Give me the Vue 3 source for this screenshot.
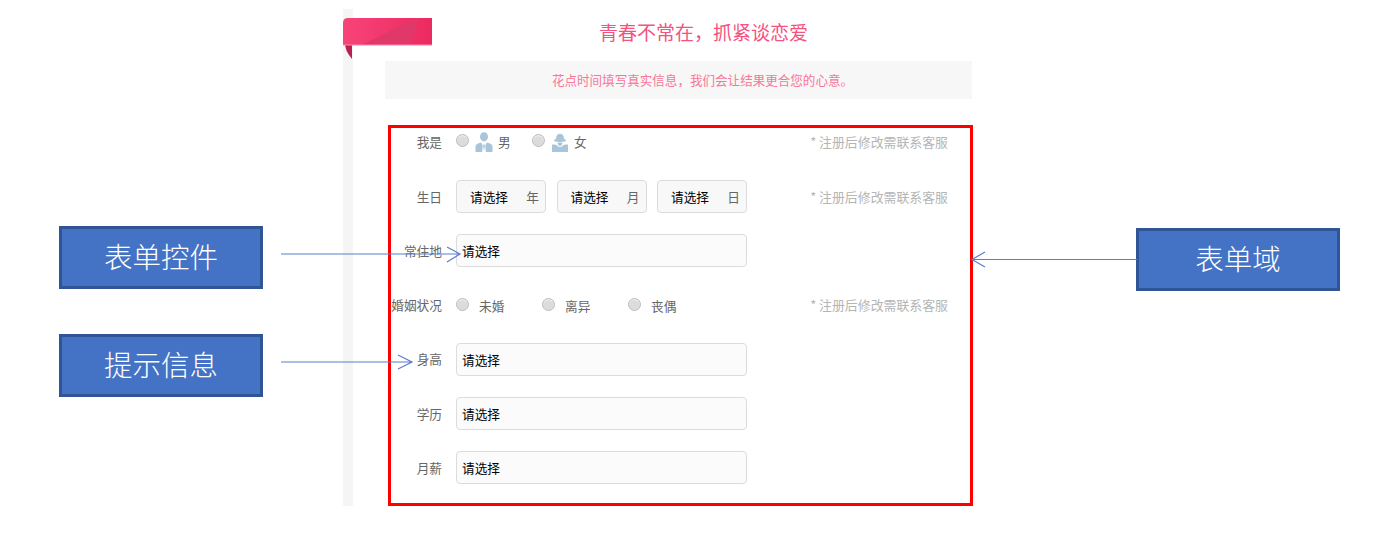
<script setup>
const hint = '* 注册后修改需联系客服'
const dateParts = ['年', '月', '日']
const genders = [
  { key: 'm', text: '男' },
  { key: 'f', text: '女' }
]
const marital = ['未婚', '离异', '丧偶']
const plainSelects = ['身高', '学历', '月薪']
</script>

<template>
  <div class="page">
    <div class="sheet">
      <h1 class="title">青春不常在，抓紧谈恋爱</h1>
      <p class="notice">花点时间填写真实信息，我们会让结果更合您的心意。</p>
      <form class="form" @submit.prevent>
        <div class="row row-first">
          <span class="label">我是</span>
          <div class="control genders">
            <label v-for="g in genders" :key="g.key" class="gender">
              <i class="radio"></i>
              <svg v-if="g.key === 'm'" class="gicon" viewBox="0 0 18 20">
                <ellipse cx="9" cy="4.800" rx="4" ry="4.600" fill="#a9c5d9" />
                <path d="M0.500 20V14.500Q0.500 11.800 6.300 10.600L7.700 13.500L7.200 20Z" fill="#a9c5d9" />
                <path d="M17.500 20V14.500Q17.500 11.800 11.700 10.600L10.300 13.500L10.800 20Z" fill="#a9c5d9" />
                <path d="M9 11.500L9.900 14L9 19L8.100 14Z" fill="#a9c5d9" />
              </svg>
              <svg v-else class="gicon" viewBox="0 0 18 20">
                <path d="M5 6.500C5 0 13 0 13 6.500L15.500 9Q9 11 2.500 9Z" fill="#a9c5d9" />
                <path d="M6.800 10.500H11.200V12.500L9 14.200L6.800 12.500Z" fill="#a9c5d9" />
                <path d="M1 12.500Q5 12 6 13.500Q9 16.500 12 13.500Q13 12 17 12.500V20H1Z" fill="#a9c5d9" />
              </svg>
              <span class="gtext">{{ g.text }}</span>
            </label>
          </div>
          <span class="hint">{{ hint }}</span>
        </div>

        <div class="row">
          <span class="label">生日</span>
          <div class="control dates">
            <div v-for="d in dateParts" :key="d" class="select small">
              <span class="value">请选择</span>
              <span class="unit">{{ d }}</span>
            </div>
          </div>
          <span class="hint">{{ hint }}</span>
        </div>

        <div class="row">
          <span class="label">常住地</span>
          <div class="control"><div class="select wide">请选择</div></div>
        </div>

        <div class="row">
          <span class="label">婚姻状况</span>
          <div class="control maritals">
            <label v-for="m in marital" :key="m" class="marital">
              <i class="radio"></i>
              <span>{{ m }}</span>
            </label>
          </div>
          <span class="hint">{{ hint }}</span>
        </div>

        <div v-for="s in plainSelects" :key="s" class="row">
          <span class="label">{{ s }}</span>
          <div class="control"><div class="select wide">请选择</div></div>
        </div>
      </form>
    </div>

    <svg class="ribbon" viewBox="0 0 89 41" width="89" height="41">
      <defs>
        <linearGradient id="rb" x1="0" x2="1" y1="0" y2="0">
          <stop offset="0" stop-color="#f74479" />
          <stop offset="1" stop-color="#ec2a60" />
        </linearGradient>
      </defs>
      <path d="M2 27L9 27V41L6 37Q3 33 2 27Z" fill="#b9204f" />
      <path d="M5 0H89V27H9Q0 27 0 27V5Q0 0 5 0Z" fill="url(#rb)" />
      <path d="M19 27L74 0H76L67 27Z" fill="#df3869" />
      <path d="M0 27H89" stroke="#f98bab" stroke-width="1" />
    </svg>

    <div class="callout c1">表单控件</div>
    <div class="callout c2">提示信息</div>
    <div class="callout c3">表单域</div>

    <svg class="arrows" viewBox="0 0 1381 544" width="1381" height="544">
      <path d="M281 254H459M447 247L460 254L447 262" />
      <path d="M281 362H411M398 355L412 362L398 369" />
      <path d="M1137 259.500H972M985 252L972 259.500L985 267" />
    </svg>
  </div>
</template>

<style>
html, body { margin: 0; background: #fff; }
</style>

<style scoped>
.page {
  position: relative;
  width: 1381px;
  height: 544px;
  overflow: hidden;
  background: #fff;
  font-family: "Noto Sans CJK SC", "Liberation Sans", sans-serif;
  font-size: 12.7px;
  color: #666;
}
.sheet {
  box-sizing: border-box;
  width: 630px;
  height: 497px;
  margin-left: 343px;
  position: relative;
  top: 9px;
  border-left: 10px solid #f5f5f5;
  padding-left: 32px;
}
.title {
  margin: 0;
  padding: 9px 2px 0 52px;
  width: 587px;
  height: 52px;
  box-sizing: border-box;
  line-height: 28px;
  text-align: center;
  font-size: 19px;
  font-weight: 400;
  color: #f4527f;
}
.notice {
  box-sizing: border-box;
  margin: 0 0 26px;
  padding-left: 48px;
  width: 587px;
  height: 38px;
  line-height: 38px;
  background: #f7f7f7;
  text-align: center;
  font-size: 12.550px;
  color: #f8769a;
}
.form {
  box-sizing: border-box;
  width: 585px;
  height: 381px;
  margin-left: 3px;
  border: 3px solid #f00;
}
.row {
  display: flex;
  align-items: center;
  height: 33px;
  margin-bottom: 21.3px;
}
.row-first {
  height: 27px;
  margin-bottom: 25px;
}
.label {
  flex: 0 0 51px;
  text-align: right;
  white-space: nowrap;
  color: #666;
  position: relative;
  top: -0.5px;
}
.control {
  margin-left: 14px;
  flex: 1;
  display: flex;
  align-items: center;
}
.hint {
  margin-right: 22px;
  color: #b5b5b5;
  font-size: 12.9px;
  white-space: nowrap;
  position: relative;
  top: -0.5px;
}
.radio {
  display: block;
  box-sizing: border-box;
  width: 13px;
  height: 13px;
  border-radius: 50%;
  background: #dcdcdc;
  border: 1px solid #bcbcbc;
  box-shadow: inset 0 1px 1px #f2f2f2;
}
.genders { gap: 20px; }
.gender {
  display: flex;
  align-items: center;
}
.gicon {
  width: 18px;
  height: 20px;
  margin-left: 6px;
  margin-right: 5px;
}
.gender .radio { position: relative; top: -1px; }
.gtext { width: 14px; }
.marital {
  display: flex;
  align-items: center;
  width: 86px;
}
.marital .radio { margin-right: 10px; position: relative; top: -1px; }
.dates { gap: 10.5px; }
.select {
  box-sizing: border-box;
  height: 33px;
  border: 1.5px solid #dcdcdc;
  border-radius: 4px;
  background: #fbfbfb;
  color: #000;
  display: flex;
  align-items: center;
}
.wide {
  width: 291px;
  padding-left: 5px;
}
.small {
  width: 90px;
  padding: 0 6px 0 13px;
  justify-content: space-between;
  background: #f8f8f8;
}
.unit { color: #666; }
.ribbon {
  position: absolute;
  left: 343px;
  top: 18px;
}
.callout {
  position: absolute;
  box-sizing: border-box;
  width: 204px;
  height: 63px;
  border: 3px solid #2f5597;
  background: #4472c4;
  color: #fff;
  font-size: 28.500px;
  font-weight: 300;
  line-height: 54px;
  text-align: center;
}
.c1 { left: 59px; top: 226px; }
.c2 { left: 59px; top: 334px; }
.c3 { left: 1136px; top: 228px; }
.arrows {
  position: absolute;
  left: 0;
  top: 0;
  pointer-events: none;
}
.arrows path {
  fill: none;
  stroke: #5b7ecb;
  stroke-width: 1.2;
}
</style>
